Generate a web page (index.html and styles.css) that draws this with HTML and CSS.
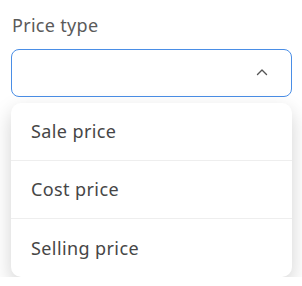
FILE: index.html
```html
<!DOCTYPE html>
<html lang="en">
  <head>
    <meta charset="UTF-8" />
    <meta name="viewport" content="width=device-width, initial-scale=1.0" />
    <title>Price type</title>
    <link rel="stylesheet" href="styles.css">
  </head>
  <body>
    <div class="field">
      <label class="label">Price type</label>
      <div class="select">
        <span class="value"></span>
        <svg class="caret" width="12" height="8" viewBox="0 0 12 8">
          <path d="M1.5 6.5 L6 2 L10.5 6.5" fill="none" stroke="#555" stroke-width="1.4" stroke-linecap="round" stroke-linejoin="round" />
        </svg>
      </div>
      <ul class="menu">
        <li class="option">Sale price</li>
        <li class="option">Cost price</li>
        <li class="option">Selling price</li>
      </ul>
    </div>
  </body>
</html>
```
FILE: styles.css
```css
body {
  margin: 0;
  font-family: "Noto Sans", sans-serif;
  background-color: #fff;
}

.field {
  padding: 12px 10px 0 11px;
}

.label {
  display: block;
  font-size: 18px;
  line-height: 26px;
  letter-spacing: 0.3px;
  color: #5a5a5a;
  margin-left: 1px;
  margin-bottom: 11px;
}

.select {
  height: 46px;
  border: 1px solid #4a8ee6;
  border-radius: 8px;
  display: flex;
  align-items: center;
  justify-content: flex-end;
  padding-right: 23px;
}

.caret {
  margin-top: -2px;
}

.menu {
  list-style: none;
  margin: 6px 0 0;
  padding: 0;
  background-color: #fff;
  border-radius: 10px;
  box-shadow: 0 8px 20px rgba(0, 0, 0, 0.18);
}

.option {
  height: 57px;
  line-height: 57px;
  padding-left: 20px;
  font-size: 18px;
  letter-spacing: 0.4px;
  color: #464646;
  border-bottom: 1px solid #eee;
}

.option:last-child {
  border-bottom: none;
  height: 58px;
  line-height: 58px;
}
```
